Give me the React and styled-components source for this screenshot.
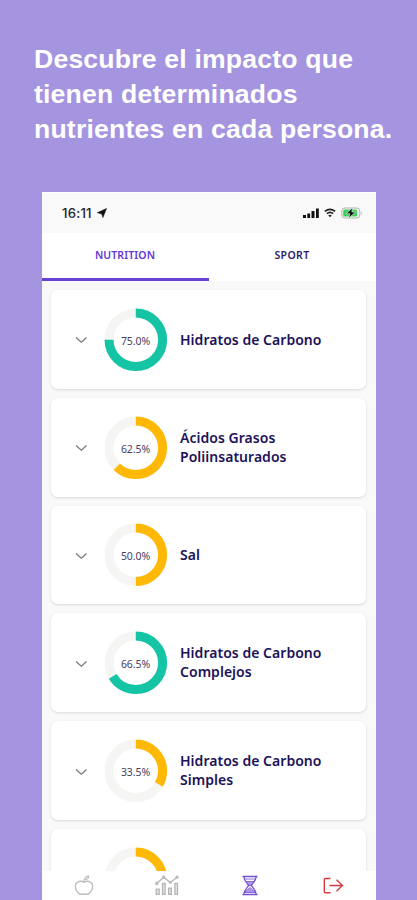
import React from "react";
import styled, { createGlobalStyle } from "styled-components";

const GlobalStyle = createGlobalStyle`
  * { box-sizing: border-box; }
  body { margin: 0; background: #a594df; }
`;

const Page = styled.main`
  height: 900px;
  width: 417px;
  overflow: hidden;
  display: flex;
  flex-direction: column;
  background: #a594df;
  font-family: "Noto Sans", sans-serif;
`;

const Headline = styled.h1`
  margin: 42px 0 0 34px;
  height: 150px;
  flex: none;
  font: 700 26.6px/35px "Liberation Sans", Arial, sans-serif;
  letter-spacing: 0.19px;
  color: #fff;
  white-space: pre-line;
`;

const Phone = styled.section`
  flex: 1;
  min-height: 0;
  width: 334px;
  margin-left: 42px;
  display: flex;
  flex-direction: column;
  background: #f9f9f9;
  border-top: 1px solid #fff;
`;

const StatusBar = styled.header`
  height: 40px;
  flex: none;
  display: flex;
  align-items: center;
  padding: 0 13px 0 20px;
`;

const Clock = styled.time`
  font: 500 13.2px/16px Inter, sans-serif;
  letter-spacing: 0.2px;
  color: #222;
  width: 35px;
  white-space: nowrap;
`;

const StatusIcons = styled.div`
  margin-left: auto;
  display: flex;
  align-items: center;
  gap: 5px;
`;

const Icon = styled.svg`
  display: block;
  flex: none;
  fill: none;
`;

const Tabs = styled.nav`
  display: flex;
  flex: none;
  height: 48px;
  background: #fff;
`;

const Tab = styled.button`
  flex: 1;
  border: 0;
  border-bottom: 3px solid ${(p) => (p.$active ? "#6a42d2" : "transparent")};
  background: none;
  padding: 0 1px 2px 0;
  font: 600 10.5px/14px "Noto Sans", sans-serif;
  letter-spacing: ${(p) => (p.$active ? "0.1px" : "0.4px")};
  color: ${(p) => (p.$active ? "#6238d6" : "#2c1c68")};
`;

const CardList = styled.div`
  flex: 1;
  min-height: 0;
  overflow: hidden;
  display: flex;
  flex-direction: column;
  gap: 9px;
  padding: 9px 10px 0 9px;
`;

const Card = styled.article`
  flex: none;
  height: 98.8px;
  display: flex;
  align-items: center;
  padding-left: 23px;
  background: #fff;
  border-radius: 7px;
  box-shadow: 0 1px 3px rgba(0, 0, 0, 0.13);
`;

const Chevron = styled.span`
  padding-top: 2px;
`;

const Gauge = styled.div`
  display: grid;
  place-items: center;
  width: 64px;
  height: 64px;
  margin: 1px 0 0 16px;

  & > * { grid-area: 1 / 1; }
`;

const GaugeValue = styled.span`
  font-size: 10.5px;
  line-height: 14px;
  letter-spacing: -0.08px;
  padding: 2px 1px 0 0;
  color: #48405f;
`;

const CardTitle = styled.h2`
  margin: 0 0 0.6px 12px;
  font-size: 14px;
  line-height: 19px;
  font-weight: 600;
  letter-spacing: 0.03px;
  color: #1d1259;
  white-space: pre-line;
`;

const BottomNav = styled.nav`
  flex: none;
  height: 29px;
  display: grid;
  grid-template-columns: repeat(4, 1fr);
  justify-items: center;
  padding: 4px 1px 0 0;
  background: #fff;
`;

const GREEN = "#14c4a4";
const AMBER = "#ffb905";

const nutrients = [
  { value: 75, title: "Hidratos de Carbono", color: GREEN },
  { value: 62.5, title: "Ácidos Grasos\nPoliinsaturados", color: AMBER },
  { value: 50, title: "Sal", color: AMBER },
  { value: 66.5, title: "Hidratos de Carbono\nComplejos", color: GREEN },
  { value: 33.5, title: "Hidratos de Carbono\nSimples", color: AMBER },
  { value: 33.5, color: AMBER },
];

function NutrientCard({ value, title, color }) {
  return (
    <Card>
      <Chevron>
        <Icon width="14" height="10" viewBox="0 0 14 10" stroke="#777580" strokeWidth="1.2">
          <path d="M2 2.5 7.3 7.3 12.5 2.5" />
        </Icon>
      </Chevron>
      <Gauge>
        <Icon width="64" height="64" viewBox="0 0 64 64" strokeWidth="9">
          <circle cx="31.8" cy="31.8" r="26.8" stroke="#f5f5f4" />
          <circle cx="31.8" cy="31.8" r="26.8" stroke={color} pathLength="100"
            strokeDasharray={`${value} 100`} transform="rotate(-90 31.8 31.8)" />
        </Icon>
        {title && <GaugeValue>{value.toFixed(1)}%</GaugeValue>}
      </Gauge>
      {title && <CardTitle>{title}</CardTitle>}
    </Card>
  );
}

export default function App() {
  return (
    <Page>
      <GlobalStyle />
      <Headline>{"Descubre el impacto que\ntienen determinados\nnutrientes en cada persona."}</Headline>
      <Phone>
        <StatusBar>
          <Clock>16:11</Clock>
          <Icon width="10" height="10" viewBox="0 0 10 10">
            <path d="M9.6.4 5.9 9.6 4.8 6 .2 4.7Z" fill="#111" stroke="#111" strokeWidth=".5" />
          </Icon>
          <StatusIcons>
            <Icon width="16" height="10" viewBox="0 0 16 10">
              <path d="M0 7h3v3H0zM4.3 5.5h2.8V10H4.3zM8.5 3h3v7h-3zM13 .5h2.8V10H13z" fill="#111" />
            </Icon>
            <Icon width="12" height="10" viewBox="0 0 12 10" stroke="#222" strokeWidth="1.6">
              <path d="M.8 3.4Q6-.8 11.2 3.4M2.8 5.6Q6 3 9.2 5.6" />
              <path d="M4.2 7.3Q6 6 7.8 7.3L6 9.3Z" fill="#222" stroke="none" />
            </Icon>
            <Icon width="22" height="12" viewBox="0 0 22 12">
              <rect x=".8" y="1" width="18" height="10" rx="3" stroke="#adb5ae" />
              <rect x="2.2" y="2.4" width="14" height="7.2" rx="1.5" fill="#3dce60" />
              <path d="M20.3 4.2Q21.7 6 20.3 7.8Z" fill="#8c928c" />
              <path d="M11.4.8 5.4 6.8h3.4L7.6 11.2l7-6.2h-3.7Z" fill="#111" stroke="#effbed" strokeWidth=".6" />
            </Icon>
          </StatusIcons>
        </StatusBar>
        <Tabs>
          <Tab $active>NUTRITION</Tab>
          <Tab>SPORT</Tab>
        </Tabs>
        <CardList>
          {nutrients.map((n, i) => <NutrientCard key={i} {...n} />)}
        </CardList>
        <BottomNav>
          <Icon width="20" height="22" viewBox="0 0 20 22" stroke="#bdbdbd" strokeWidth="1.4">
            <path d="M10 7.2C8 6 5.8 6 4.2 6.8 1.8 7.8 1.2 10 1.5 12.2c.3 3 2 5.3 4 6.6.6.4 1.3.5 2 .5h5c.7 0 1.4-.1 2-.5 2-1.3 3.7-3.6 4-6.6.3-2.2-.3-4.4-2.7-5.4C14.200 6 12 6 10 7.200Z" />
            <path d="M10 7V4.500M10.800 4.500C11 2.300 12.300 1.200 14.700 1.200 14.500 3.400 13.200 4.500 10.800 4.500Z" strokeWidth="1.200" />
          </Icon>
          <Icon width="24" height="22" viewBox="0 0 24 22" stroke="#b5b5b5" strokeWidth="1.3">
            <path d="M2 8.300 8.700 2.200l6.600 5.300 7-5.300" />
            <g fill="#fff">
              <circle cx="1.800" cy="8.500" r="1" />
              <circle cx="8.700" cy="2.200" r="1" />
              <circle cx="15.300" cy="7.300" r="1" />
              <circle cx="22" cy="2.200" r="1" />
            </g>
            <path d="M1.200 14.200h3v5.200h-3zM7.500 8.500h2.600v10.900H7.500zM13.600 13.200h2.800v6.200h-2.800zM19.900 8.400h2.600v11h-2.600z" fill="#e4e4e4" />
          </Icon>
          <Icon width="18" height="22" viewBox="0 0 18 22" stroke="#7551cf" strokeWidth="1.3">
            <path d="M1.500 1.500h15M1.500 19.500h15" />
            <path d="M2.800 1.500c.3 4.300 2.500 6 5 9-2.500 3-4.700 4.700-5 9M15.200 1.500c-.3 4.300-2.500 6-5 9 2.500 3 4.700 4.700 5 9" />
            <path d="M3.500 4h11M4.500 6.500h9L9 11ZM3.500 17.500C5 15.500 7.500 14.500 9 12.500c1.500 2 4 3 5.500 5Z" fill="#ad97e9" strokeWidth=".8" />
          </Icon>
          <Icon width="22" height="22" viewBox="0 0 22 22" stroke="#d93b40" strokeWidth="1.4">
            <path d="M8.500 3.500H3.500Q2.300 3.500 2.300 4.700V16.500Q2.300 17.700 3.500 17.700H8.500M7.500 10.500h13M14.500 4.700l6 5.800-6 5.800" />
          </Icon>
        </BottomNav>
      </Phone>
    </Page>
  );
}
